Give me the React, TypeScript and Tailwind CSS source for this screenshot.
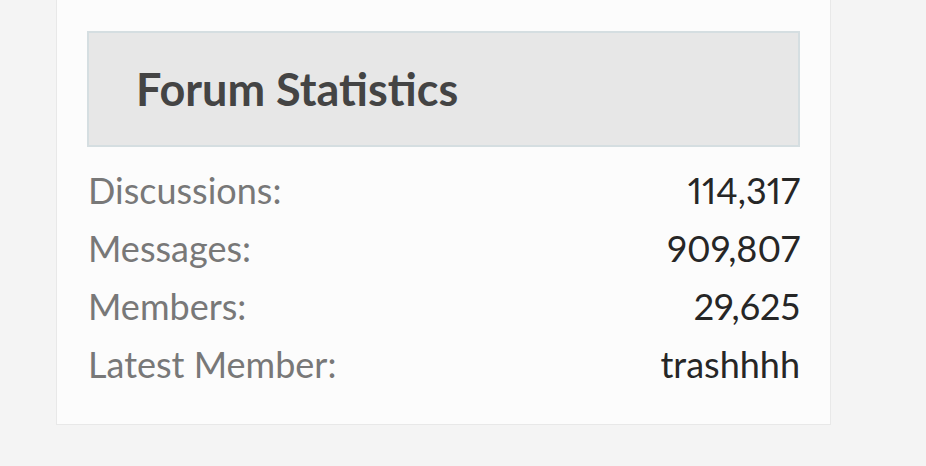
const stats = [
  { label: "Discussions:", value: "114,317" },
  { label: "Messages:", value: "909,807" },
  { label: "Members:", value: "29,625" },
  { label: "Latest Member:", value: "trashhhh" },
];

export default function App() {
  return (
    <div className="h-[466px] w-[926px] overflow-hidden bg-[#f4f4f4] pl-[56px] font-['Lato',sans-serif]">
      <div className="h-[425px] w-[775px] border border-t-0 border-[#e8e8e8] bg-[#fcfcfc] px-[30px] pt-[31px]">
        <div className="flex h-[116px] items-center border-2 border-[#d5dee1] bg-[#e7e7e7] pl-[47px]">
          <h3 className="text-[45px] font-bold leading-none text-[#444]">
            Forum Statistics
          </h3>
        </div>
        <dl className="mt-[14px] pl-[1px]">
          {stats.map((row) => (
            <div
              key={row.label}
              className="flex h-[58px] items-center justify-between text-[36px] leading-[58px]"
            >
              <dt className="text-[#787878]">{row.label}</dt>
              <dd className="proportional-nums text-[#262626]">{row.value}</dd>
            </div>
          ))}
        </dl>
      </div>
    </div>
  );
}
